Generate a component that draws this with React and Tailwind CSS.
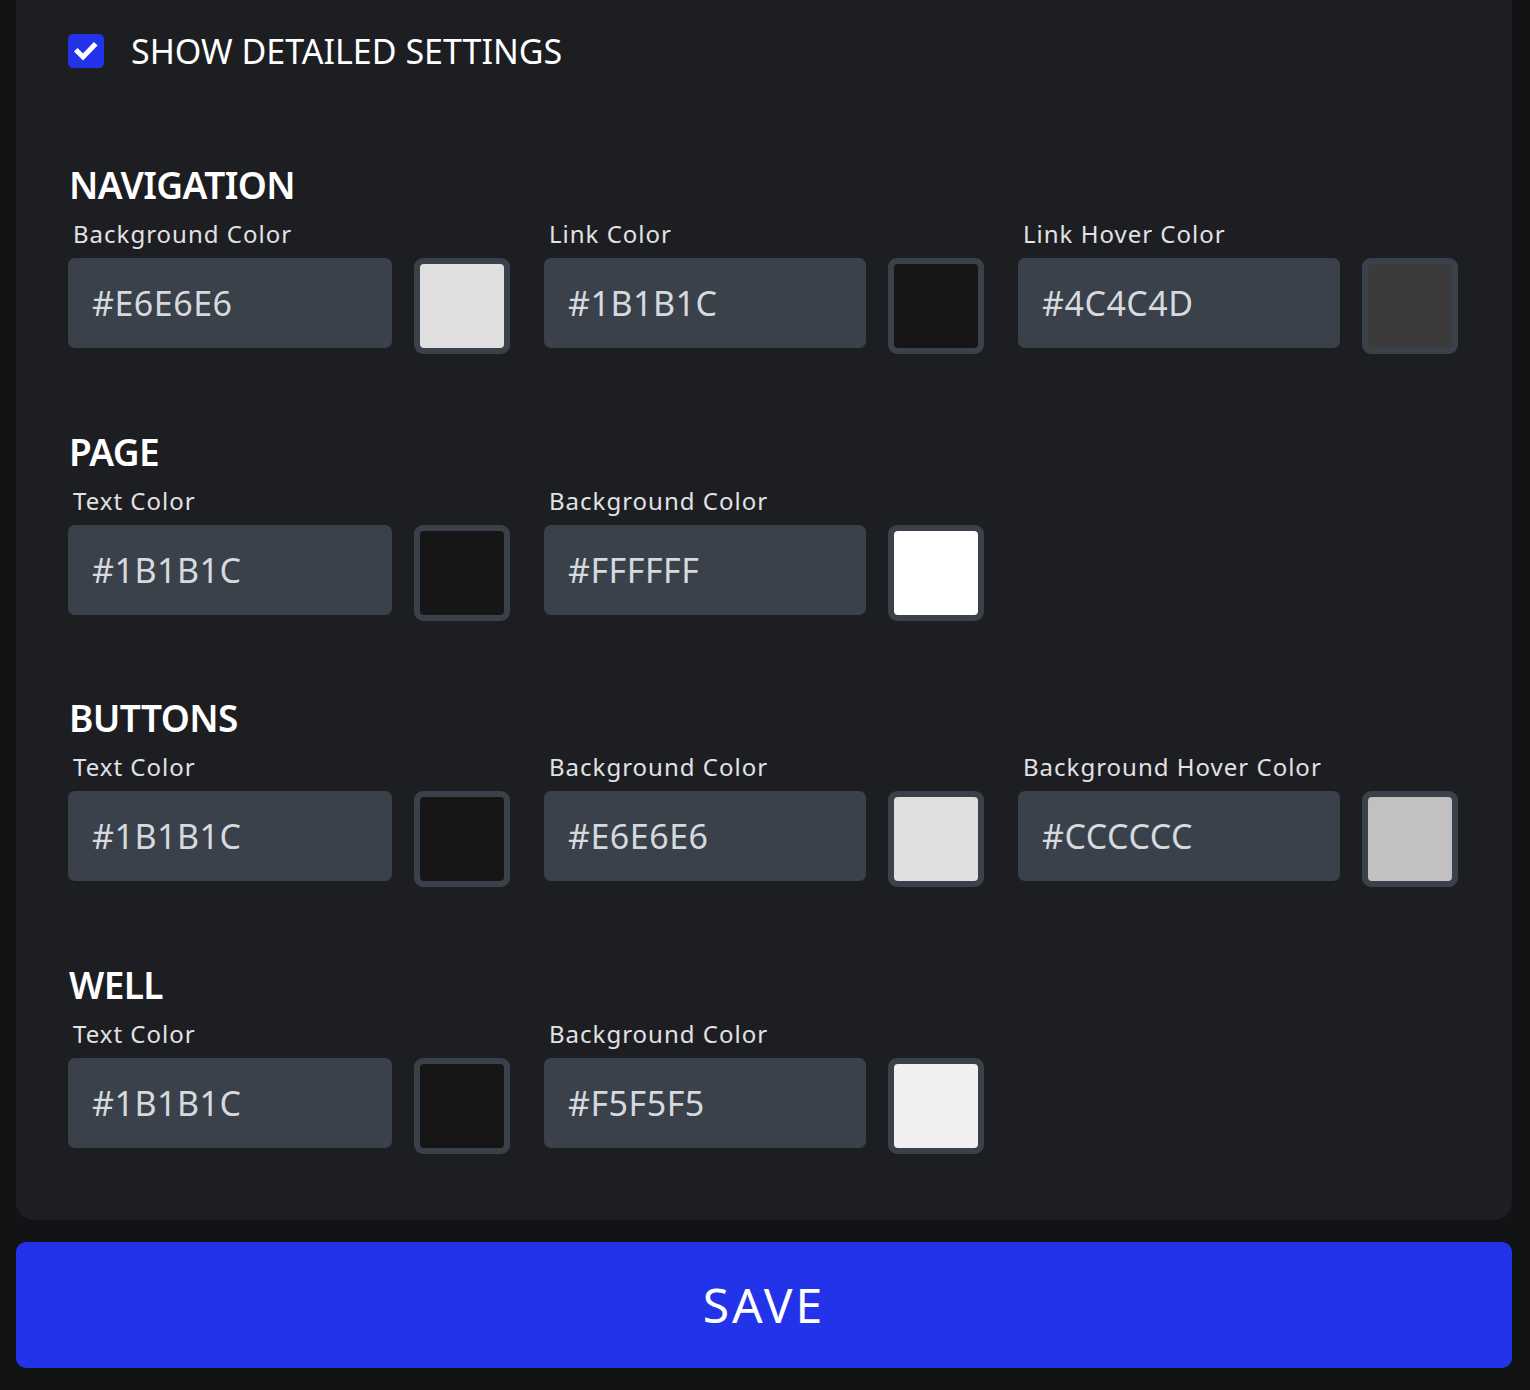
const sections = [
  {
    title: "NAVIGATION",
    fields: [
      { label: "Background Color", value: "#E6E6E6", swatch: "bg-[#dfdfdf]" },
      { label: "Link Color", value: "#1B1B1C", swatch: "bg-[#161616]" },
      { label: "Link Hover Color", value: "#4C4C4D", swatch: "bg-[#3b3b3b]" },
    ],
  },
  {
    title: "PAGE",
    fields: [
      { label: "Text Color", value: "#1B1B1C", swatch: "bg-[#161616]" },
      { label: "Background Color", value: "#FFFFFF", swatch: "bg-[#ffffff]" },
    ],
  },
  {
    title: "BUTTONS",
    fields: [
      { label: "Text Color", value: "#1B1B1C", swatch: "bg-[#161616]" },
      { label: "Background Color", value: "#E6E6E6", swatch: "bg-[#dfdfdf]" },
      { label: "Background Hover Color", value: "#CCCCCC", swatch: "bg-[#c1c1c1]" },
    ],
  },
  {
    title: "WELL",
    fields: [
      { label: "Text Color", value: "#1B1B1C", swatch: "bg-[#161616]" },
      { label: "Background Color", value: "#F5F5F5", swatch: "bg-[#f0f0f0]" },
    ],
  },
];

function ColorField({ label, value, swatch }) {
  return (
    <div>
      <label className="block pl-[5px] text-[24px] leading-[24px] tracking-[1px] text-[#e2e2e4]">{label}</label>
      <div className="mt-[12px] flex items-start gap-[22px]">
        <input
          readOnly
          value={value}
          className="h-[90px] min-w-0 flex-1 rounded-[7px] bg-[#3a414a] pl-[24px] text-[34px] tracking-[0.5px] text-[#d6dadf] outline-none"
        />
        <div className="h-[96px] w-[96px] shrink-0 rounded-[9px] border-[6px] border-[#3a414a] bg-[#3a414a]">
          <div className={`h-full w-full rounded-[4px] ${swatch}`} />
        </div>
      </div>
    </div>
  );
}

export default function App() {
  return (
    <div className="min-h-screen bg-[#121315] pl-[16px] pr-[18px] pb-[22px]" style={{ fontFamily: '"Noto Sans", "Open Sans", sans-serif' }}>
      <div className="rounded-b-[18px] bg-[#1d1e22] pl-[52px] pr-[54px] pt-[34px] pb-[66px]">
        <label className="flex h-[34px] items-center gap-[27px]">
          <span className="flex h-[34px] w-[36px] items-center justify-center rounded-[5px] bg-[#2233ea]">
            <svg width="24" height="24" viewBox="0 0 24 24" fill="none">
              <path d="M3.5 12.5l5.5 5.5 11-11.5" stroke="#fff" strokeWidth="5" strokeLinecap="square" />
            </svg>
          </span>
          <span className="text-[34px] leading-[34px] text-white">SHOW DETAILED SETTINGS</span>
        </label>

        {sections.map((s, i) => (
          <section key={s.title} className={i === 0 ? "mt-[98px]" : "mt-[78.7px]"}>
            <h2 className="pl-[1px] text-[37px] leading-[38px] font-semibold tracking-[-0.6px] text-white">{s.title}</h2>
            <div className="mt-[18px] grid grid-cols-[476px_474px_440px]">
              {s.fields.map((f, j) => (
                <div key={f.label + f.value} className={j === 0 ? "w-[442px]" : "w-[440px]"}>
                  <ColorField {...f} />
                </div>
              ))}
            </div>
          </section>
        ))}
      </div>

      <button className="mt-[22px] flex h-[126px] w-full items-center justify-center rounded-[10px] bg-[#2233ea] text-[48px] tracking-[3px] text-white">
        SAVE
      </button>
    </div>
  );
}
